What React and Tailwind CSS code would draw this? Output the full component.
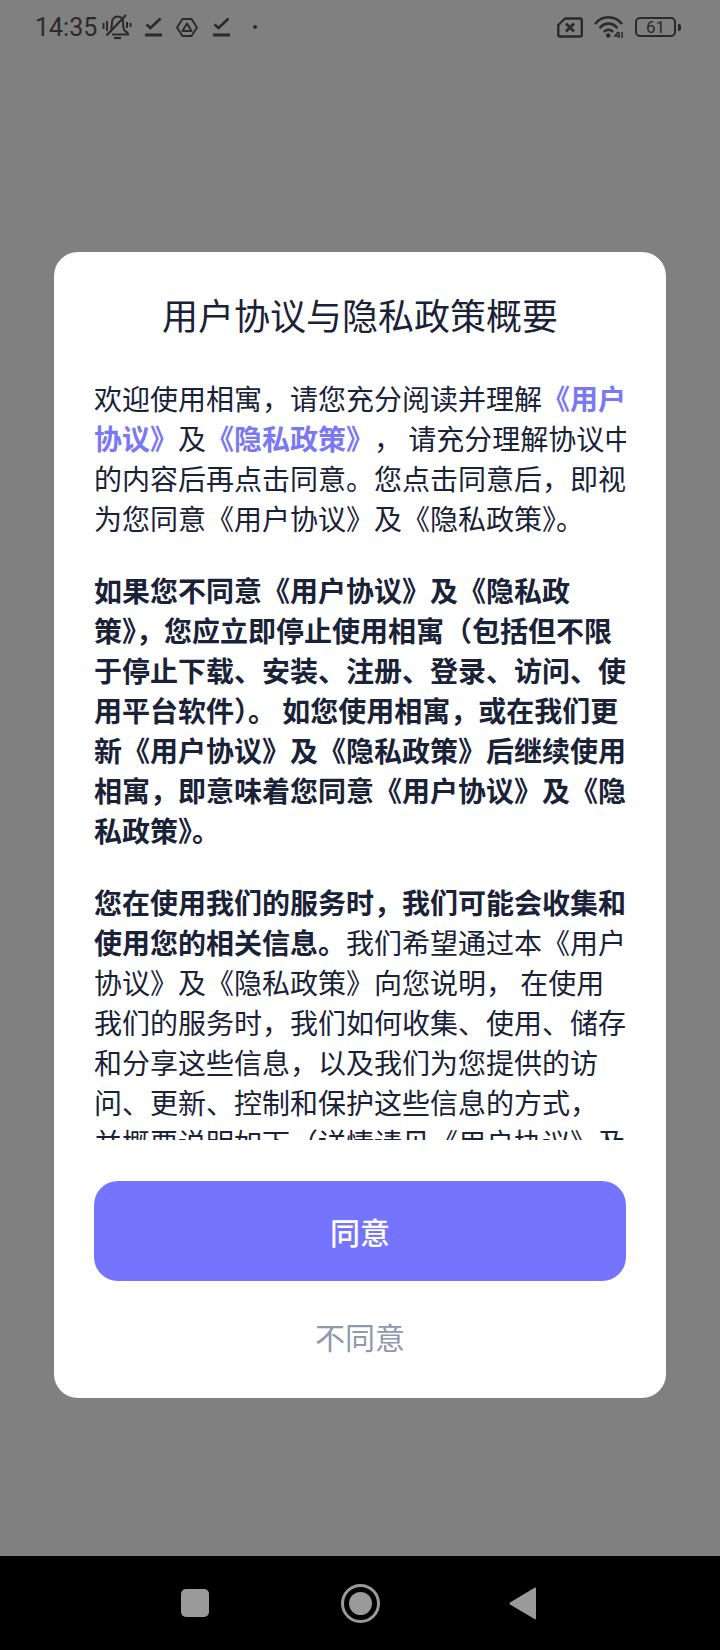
const cjk = "font-['Noto_Sans_CJK_SC',sans-serif]"

const para1 = [
  [['欢迎使用相寓，请您充分阅读并理解', 'n'], ['《用户', 'l']],
  [['协议》', 'l'], ['及', 'n'], ['《隐私政策》', 'l'], ['， 请充分理解协议中', 'n']],
  [['的内容后再点击同意。您点击同意后，即视', 'n']],
  [['为您同意《用户协议》及《隐私政策》。', 'n']],
]

const para2 = [
  '如果您不同意《用户协议》及《隐私政',
  '策》，您应立即停止使用相寓（包括但不限',
  '于停止下载、安装、注册、登录、访问、使',
  '用平台软件）。 如您使用相寓，或在我们更',
  '新《用户协议》及《隐私政策》后继续使用',
  '相寓，即意味着您同意《用户协议》及《隐',
  '私政策》。',
].map((t) => [[t, 'b']])

const para3 = [
  [['您在使用我们的服务时，我们可能会收集和', 'b']],
  [['使用您的相关信息。', 'b'], ['我们希望通过本《用户', 'n']],
  [['协议》及《隐私政策》向您说明， 在使用', 'n']],
  [['我们的服务时，我们如何收集、使用、储存', 'n']],
  [['和分享这些信息，以及我们为您提供的访', 'n']],
  [['问、更新、控制和保护这些信息的方式，', 'n']],
  [['并概要说明如下（详情请见《用户协议》及', 'n']],
]

const runClass = {
  n: 'text-[#1a2238]',
  b: 'text-[#1a2238] font-semibold',
  l: 'text-[#7b78f5] font-semibold',
}

const Para = ({ lines, className }) => (
  <div className={className}>
    {lines.map((runs, i) => (
      <div key={i} className="whitespace-pre">
        {runs.map(([text, kind], j) => (
          <span key={j} className={`${runClass[kind]} ${runs.length > 2 ? '[text-spacing-trim:space-all]' : ''}`}>{text}</span>
        ))}
      </div>
    ))}
  </div>
)

const CheckIcon = () => (
  <svg width="17" height="20" viewBox="0 0 17 20" fill="none" stroke="#2a2a2a">
    <path d="M1.5 7.5 L5.5 11 L15.5 1.5" strokeWidth="2.6" />
    <path d="M0 18 H17" strokeWidth="3" />
  </svg>
)

const StatusBar = () => (
  <div className="h-[54px] shrink-0 flex items-center pl-[35px] pr-[39px] text-[#2a2a2a]">
    <span className="font-['Roboto',sans-serif] text-[25px] leading-none w-[67px]">14:35</span>
    {/* muted bell */}
    <svg width="30" height="26" viewBox="0 0 30 26" fill="none" stroke="#2a2a2a" strokeWidth="2">
      <path d="M8.5 18 C10.5 15 9 8 11 5 C13 2 18 1.5 20.5 5 C22 8 20 15 23 17 C25 18 26 19 26 20.5 H10" />
      <path d="M12 24 H19" strokeWidth="2.2" />
      <path d="M4.5 21.5 L24 1" strokeWidth="2.2" />
      <path d="M5 7 V17 M1.5 9 V15 M25 8 V14 M28.5 9 V13" strokeWidth="2" />
    </svg>
    <div className="ml-[13px]"><CheckIcon /></div>
    <svg className="ml-[14px]" width="22" height="19" viewBox="0 0 22 19" fill="none" stroke="#2a2a2a" strokeWidth="1.9">
      <path d="M6.5 1 H15.5 L21 9.5 L15.5 18 H6.5 L1 9.5 Z" strokeLinejoin="round" />
      <path d="M11 5.5 L15.5 13 H6.5 Z" strokeLinejoin="round" />
    </svg>
    <div className="ml-[15px]"><CheckIcon /></div>
    <div className="ml-[23px] w-[4px] h-[4px] rounded-full bg-[#2a2a2a]" />
    <div className="flex-1" />
    {/* no sim */}
    <svg width="26" height="21" viewBox="0 0 26 21" fill="none" stroke="#2a2a2a" strokeWidth="2.4">
      <path d="M8 1.5 H23 Q24.8 1.5 24.8 3.5 V18 Q24.8 19.5 23 19.5 H3 Q1.3 19.5 1.3 18 V8 Z" strokeLinejoin="round" />
      <path d="M9 6.5 L17 14.5 M17 6.5 L9 14.5" strokeWidth="2.6" />
    </svg>
    {/* wifi */}
    <svg className="ml-[11px]" width="29" height="24" viewBox="0 0 29 24" fill="none" stroke="#2a2a2a" strokeWidth="2.6">
      <path d="M1 9 C8 0 21 0 28 9" />
      <path d="M5.7 13.3 C10 7 19 7 23.3 13.3" />
      <path d="M10 17 C12 14 17 14 19 17" />
      <circle cx="14.3" cy="20.5" r="2.2" fill="#2a2a2a" stroke="none" />
      <path d="M24 17 L21 21 H25 M25 17 V23 M28 23 V17" strokeWidth="1.5" />
    </svg>
    {/* battery */}
    <div className="ml-[12px] flex items-center">
      <div className="w-[41px] h-[20px] rounded-[5px] border-2 border-[#2a2a2a] flex items-center justify-center font-['Roboto',sans-serif] text-[17px] leading-none">
        61
      </div>
      <div className="ml-[2px] w-[3px] h-[7px] rounded-r-[2px] bg-[#2a2a2a]" />
    </div>
  </div>
)

const NavBar = () => (
  <div className="h-[94px] shrink-0 bg-black flex items-center pl-[181px]">
    <div className="w-[28px] h-[28px] rounded-[5px] bg-[#9a9a9a]" />
    <div className="ml-[132px] w-[39px] h-[39px] rounded-full border-[3px] border-[#9a9a9a] flex items-center justify-center">
      <div className="w-[23px] h-[23px] rounded-full bg-[#9a9a9a]" />
    </div>
    <svg className="ml-[129px]" width="28" height="33" viewBox="0 0 28 33" fill="#9a9a9a">
      <path d="M25.5 0.8 Q27 0 27 2 V31 Q27 33 25.5 32 L1 17.5 Q0 16.5 1 15.5 Z" />
    </svg>
  </div>
)

export default function App() {
  return (
    <div className={`w-[720px] h-[1650px] flex flex-col bg-[#808080] ${cjk}`}>
      <StatusBar />
      <div className="flex-1 pt-[198px] px-[54px]">
        <div className="h-[1146px] bg-white rounded-[24px] px-[40px] flex flex-col">
          <h1 className="mt-[41px] text-center text-[36px] leading-[42px] font-normal text-[#1a2238]">
            用户协议与隐私政策概要
          </h1>
          <div className="mt-[43px] h-[762px] shrink-0 overflow-hidden text-[28px] leading-[40px]">
            <Para lines={para1} />
            <Para lines={para2} className="mt-[32px]" />
            <Para lines={para3} className="mt-[32px]" />
          </div>
          <button className="mt-[41px] h-[100px] shrink-0 rounded-[24px] bg-[#7574ff] text-white text-[30px] font-medium">
            同意
          </button>
          <div className="mt-[35px] text-center text-[30px] leading-[40px] text-[#8f99ab]">不同意</div>
        </div>
      </div>
      <NavBar />
    </div>
  )
}
